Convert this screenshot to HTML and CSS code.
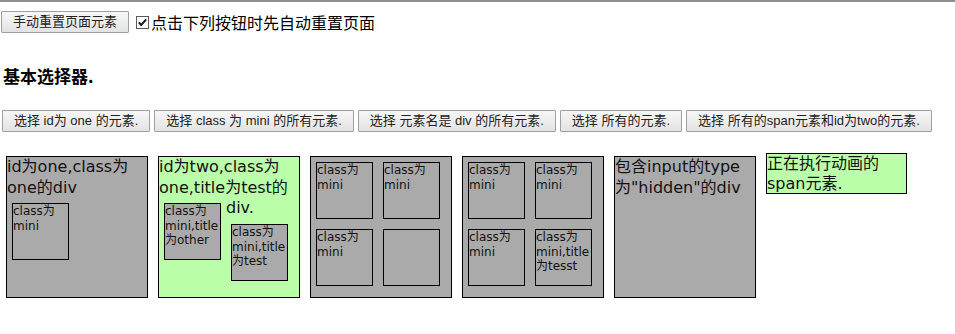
FILE: index.html
```html
<!DOCTYPE html>
<html lang="zh-CN">
<head>
<meta charset="utf-8">
<title>基本选择器</title>
<link rel="stylesheet" href="styles.css">
</head>
<body>
<div class="page">
  <div class="controls">
    <button class="btn" type="button">手动重置页面元素</button>
    <label class="auto">
      <svg class="check" width="13" height="13" viewBox="0 0 13 13" aria-hidden="true">
        <rect x="0.5" y="0.5" width="12" height="12" fill="#fff" stroke="#5a5a5a"/>
        <path d="M2.8 6.4 L5.2 9 L10.2 3.4" fill="none" stroke="#1a1a1a" stroke-width="2"/>
      </svg>
      <span>点击下列按钮时先自动重置页面</span>
    </label>
  </div>

  <h3 class="title">基本选择器.</h3>

  <div class="actions">
    <button class="btn" type="button">选择 id为 one 的元素.</button>
    <button class="btn" type="button">选择 class 为 mini 的所有元素.</button>
    <button class="btn" type="button">选择 元素名是 div 的所有元素.</button>
    <button class="btn" type="button">选择 所有的元素.</button>
    <button class="btn" type="button">选择 所有的span元素和id为two的元素.</button>
  </div>

  <div class="stage">
    <div class="box">
      <p class="label">id为one,class为<br>one的div</p>
      <div class="mini">class为mini</div>
    </div>
    <div class="box green">id为two,class为<br>one,title为test的<br>div.<div class="mini">class为mini,title为other</div><div class="mini">class为mini,title为test</div></div>
    <div class="box grid">
      <div class="mini">class为mini</div>
      <div class="mini">class为mini</div>
      <div class="mini">class为mini</div>
      <div class="mini"></div>
    </div>
    <div class="box grid">
      <div class="mini">class为mini</div>
      <div class="mini">class为mini</div>
      <div class="mini">class为mini</div>
      <div class="mini">class为mini,title为tesst</div>
    </div>
    <div class="box">包含input的type<br>为"hidden"的div</div>
    <span class="anim">正在执行动画的<br>span元素.</span>
  </div>
</div>
</body>
</html>
```

FILE: styles.css
```css
html, body {
  margin: 0;
  padding: 0;
  background: #fff;
}

.page {
  border-top: 2px solid #8f8f8f;
  padding-left: 1px;
  font-family: "DejaVu Sans", "Noto Sans CJK SC", sans-serif;
  color: #111;
}

.btn {
  box-sizing: border-box;
  height: 22px;
  margin: 0;
  padding: 0 11px;
  border: 1px solid #a0a0a0;
  border-radius: 1px;
  background: linear-gradient(#f7f7f7, #e3e3e3);
  font-family: "Liberation Sans", "Noto Sans CJK SC", sans-serif;
  font-size: 13px;
  line-height: 20px;
  color: #222;
  white-space: nowrap;
}

.controls {
  display: flex;
  align-items: center;
  margin-top: 9px;
  height: 22px;
}

.auto {
  display: flex;
  align-items: center;
  margin-left: 7px;
  font-family: "Noto Sans CJK SC", sans-serif;
  font-size: 16px;
  line-height: 20px;
  color: #000;
}

.check {
  display: block;
  margin-right: 2px;
}

.title {
  margin: 31px 0 0;
  padding-left: 2px;
  height: 24px;
  font-family: "Noto Sans CJK SC", sans-serif;
  font-size: 17px;
  font-weight: 700;
  line-height: 24px;
  color: #000;
}

.actions {
  display: flex;
  gap: 4px;
  margin-top: 22px;
  padding-left: 1px;
}

.stage {
  display: flex;
  align-items: flex-start;
  margin-top: 19px;
}

.box {
  box-sizing: content-box;
  width: 140px;
  height: 140px;
  margin: 5px;
  border: 1px solid #000;
  background: #aaa;
  font-size: 16px;
  line-height: 20.7px;
  color: #111;
  overflow: hidden;
}

.box.green {
  background: #bbffaa;
}

.label {
  margin: 0;
}

.mini {
  float: left;
  width: 55px;
  height: 55px;
  margin: 5px;
  border: 1px solid #000;
  background: #aaa;
  font-size: 12px;
  line-height: 14.5px;
  color: #111;
  overflow: hidden;
}

.box.grid {
  display: grid;
  grid-template-columns: 57px 57px;
  grid-template-rows: 57px 57px;
  gap: 10px;
  box-sizing: border-box;
  width: 142px;
  height: 142px;
  padding: 5px;
}

.box.grid .mini {
  float: none;
  margin: 0;
}

.anim {
  display: block;
  width: 139px;
  height: 39px;
  margin: 2px 5px 5px;
  border: 1px solid #000;
  background: #bbffaa;
  font-size: 16px;
  line-height: 20px;
  color: #111;
  overflow: hidden;
}
```
